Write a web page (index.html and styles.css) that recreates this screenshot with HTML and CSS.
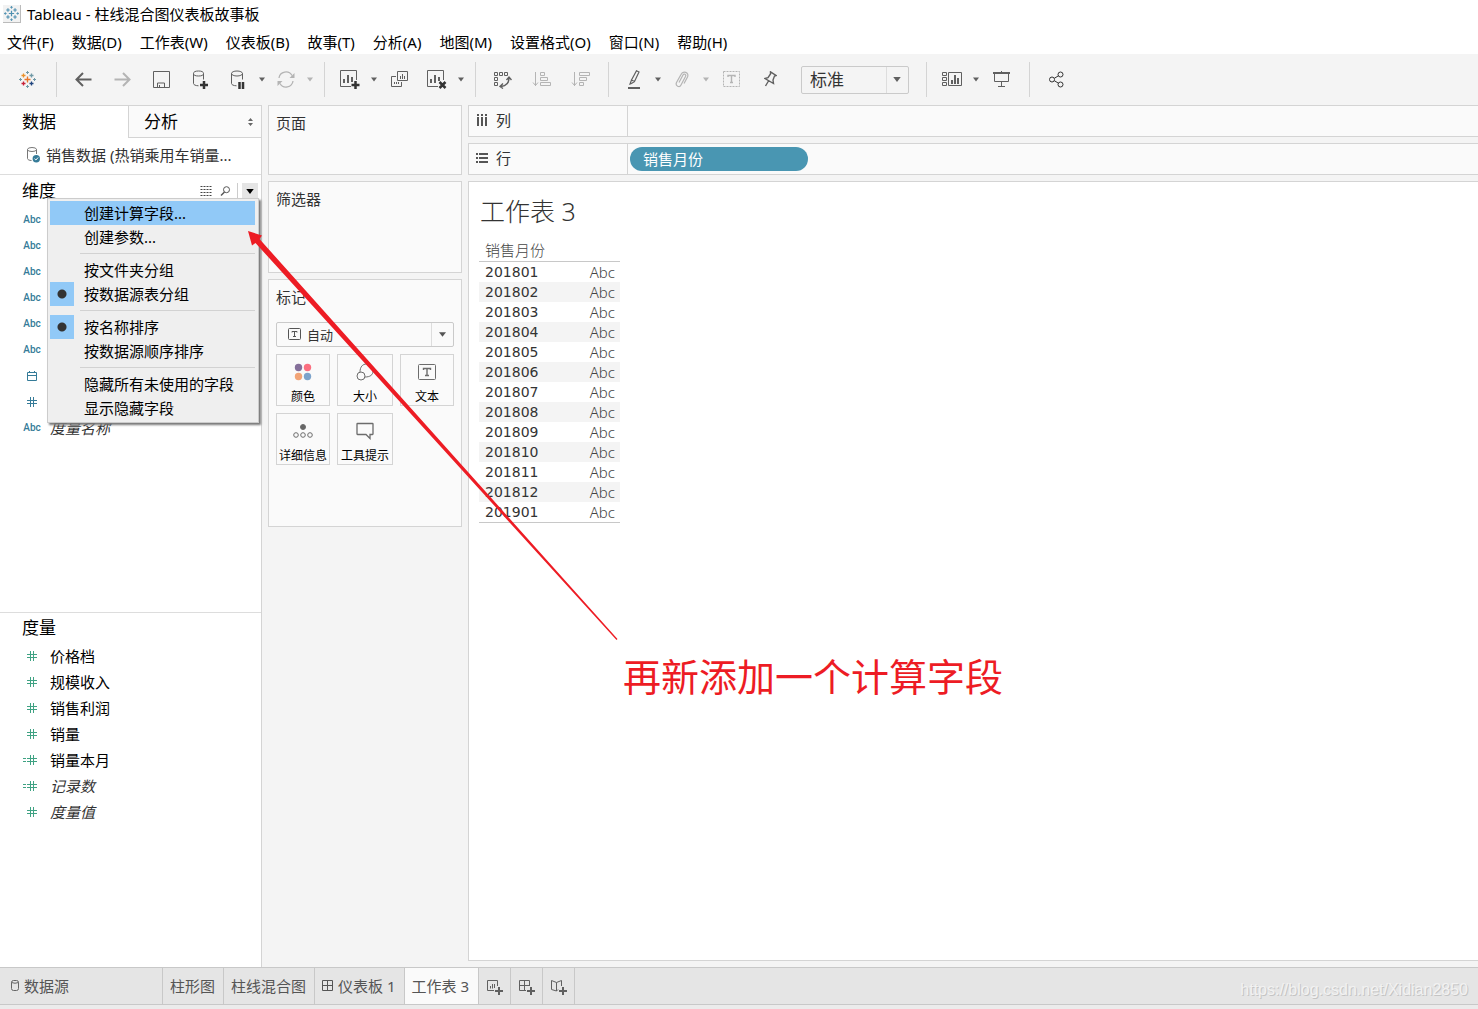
FILE: index.html
```html
<!DOCTYPE html>
<html lang="zh-CN">
<head>
<meta charset="utf-8">
<title>Tableau - 柱线混合图仪表板故事板</title>
<link rel="stylesheet" href="styles.css">
</head>
<body>
<svg class="sprite" aria-hidden="true">
  <symbol id="caret" viewBox="0 0 6 4"><path d="M0 0h6L3 4z" fill="currentColor"/></symbol>
  <symbol id="hash" viewBox="0 0 10 10"><path d="M3.500 0v10M6.500 0v10M0 3.500h10M0 6.500h10" fill="none" stroke="currentColor"/></symbol>
  <symbol id="eqhash" viewBox="0 0 14 10"><path d="M7.500 0v10M10.500 0v10M4 3.500h10M4 6.500h10M0 3.500h3M0 6.500h3" fill="none" stroke="currentColor"/></symbol>
  <symbol id="grid4" viewBox="0 0 11 11"><path d="M.5.5h10v10H.5zM5.500.5v10M.5 5.500h10" fill="none" stroke="currentColor"/></symbol>
  <symbol id="flake" viewBox="0 0 17 17"><path d="M8.500 5.500v6M5.500 8.500h6" stroke="var(--c0)" stroke-width="1.400"/><path d="M4.500 2.500v4M2.500 4.500h4" stroke="var(--c1)" stroke-width="1.300"/><path d="M12.500 2.500v4M10.500 4.500h4" stroke="var(--c2)" stroke-width="1.300"/><path d="M4.500 10.500v4M2.500 12.500h4" stroke="var(--c3)" stroke-width="1.300"/><path d="M12.500 10.500v4M10.500 12.500h4" stroke="var(--c4)" stroke-width="1.300"/><path d="M8.500 0v3M7 1.500h3M8.500 14v3M7 15.500h3M1.500 7v3M0 8.500h3M15.500 7v3M14 8.500h3" stroke="var(--c2)"/></symbol>
</svg>

<div class="app">
  <header>
    <div class="titlebar">
      <span class="app-icon"><svg width="15" height="15"><use href="#flake"/></svg></span>
      <span>Tableau - 柱线混合图仪表板故事板</span>
    </div>
    <nav class="menubar">
      <button>文件(F)</button><button>数据(D)</button><button>工作表(W)</button><button>仪表板(B)</button><button>故事(T)</button><button>分析(A)</button><button>地图(M)</button><button>设置格式(O)</button><button>窗口(N)</button><button>帮助(H)</button>
    </nav>
  </header>

  <div class="toolbar">
    <button class="tool home" aria-label="起始页"><svg width="17" height="17"><use href="#flake"/></svg></button>
    <span class="divider"></span>
    <button class="tool" aria-label="撤消"><svg width="17" height="15" viewBox="0 0 17 15"><path d="M16.500 7.500H1.500M8 1L1.500 7.500 8 14" stroke-width="2"/></svg></button>
    <button class="tool off" aria-label="重做"><svg width="17" height="15" viewBox="0 0 17 15"><path d="M.5 7.500h15M9 1l6.500 6.500L9 14" stroke-width="2"/></svg></button>
    <button class="tool" aria-label="保存"><svg width="17" height="17" viewBox="0 0 17 17"><path d="M.5.5h16v16H.5zM4.500 16v-4h7v4M6.500 16v-2"/></svg></button>
    <button class="tool" aria-label="新建数据源"><svg width="17" height="19" viewBox="0 0 17 19"><ellipse cx="6.500" cy="3.500" rx="5" ry="2.500"/><path d="M1.500 3.500v10c0 1.200 2 2.200 5 2.300M11.500 3.500v6"/><path d="M12 11v8M8 15h8" class="dark"/></svg></button>
    <button class="tool split" aria-label="暂停更新"><svg width="14" height="19" viewBox="0 0 14 19"><ellipse cx="6" cy="3.500" rx="5.500" ry="2.500"/><path d="M.5 3.500v10c0 1.200 2 2.200 5 2.300M11.500 3.500v6"/><path d="M8.500 12v7M12 12v7" class="dark"/></svg></button>
    <button class="more" aria-label="更新选项"><svg width="6" height="5"><use href="#caret"/></svg></button>
    <button class="tool split off" aria-label="刷新"><svg width="18" height="17" viewBox="0 0 18 17"><path d="M2 7A7 7 0 0 1 15 4.500M16 10A7 7 0 0 1 3 12.500" stroke-width="1.300"/><path d="M17.500 2v5h-5zM.5 15v-5h5z" fill="currentColor" stroke="none"/></svg></button>
    <button class="more off" aria-label="刷新选项"><svg width="6" height="5"><use href="#caret"/></svg></button>
    <span class="divider"></span>
    <button class="tool split" aria-label="新建工作表"><svg width="20" height="19" viewBox="0 0 20 19"><path d="M11 16.500H.5V.5h16V10"/><path d="M4 9v4M8 5v8M12 7v5" stroke-width="2"/><path d="M15.500 11v8M11.500 15h8" class="dark"/></svg></button>
    <button class="more" aria-label="新建选项"><svg width="6" height="5"><use href="#caret"/></svg></button>
    <button class="tool" aria-label="复制工作表"><svg width="17" height="17" viewBox="0 0 17 17"><path d="M6.500.5h10v9h-10zM5 5.500H.5v10h10V11M9.500 5v3M11.500 3v5M13.500 5v3M3.500 11v2M5.500 11v2M7.500 11v2"/></svg></button>
    <button class="tool split" aria-label="清除工作表"><svg width="20" height="19" viewBox="0 0 20 19"><path d="M11 16.500H.5V.5h16V10"/><path d="M4 9v4M8 5v8M12 7v4" stroke-width="2"/><path d="M12.500 12l6 6M18.500 12l-6 6" class="dark"/></svg></button>
    <button class="more" aria-label="清除选项"><svg width="6" height="5"><use href="#caret"/></svg></button>
    <span class="divider"></span>
    <button class="tool" aria-label="交换行和列"><svg width="19" height="19" viewBox="0 0 19 19"><path d="M1.500 2.500h3v3h-3zM6.500 2.500h3v3h-3zM11.500 2.500h3v3h-3zM1.500 7.500h3v3h-3zM1.500 12.500h3v3h-3z"/><path d="M16 8c0 5-3 8-8 8.500M13.500 10L16 7l2.500 3M10 13.500L7 16.500l3 2" stroke-width="1.400"/></svg></button>
    <button class="tool off" aria-label="升序排序"><svg width="19" height="17" viewBox="0 0 19 17"><path d="M3.500 1v14M1 11.500l2.500 3 2.500-3M8.500 1.500h4v3h-4zM8.500 6.500h7v3h-7zM8.500 11.500h10v3h-10z"/></svg></button>
    <button class="tool off" aria-label="降序排序"><svg width="19" height="17" viewBox="0 0 19 17"><path d="M3.500 1v14M1 11.500l2.500 3 2.500-3M8.500 1.500h10v3h-10zM8.500 6.500h7v3h-7zM8.500 11.500h4v3h-4z"/></svg></button>
    <span class="divider"></span>
    <button class="tool split" aria-label="突出显示"><svg width="14" height="19" viewBox="0 0 14 19"><path d="M9.500.7l2.500 1.300-4.500 9.500-3-1.500zM4.500 10l-1.500 4 1.500-.5L7.500 11.500" stroke-width="1.200"/><path d="M1 18h12" stroke-width="2"/></svg></button>
    <button class="more" aria-label="突出显示选项"><svg width="6" height="5"><use href="#caret"/></svg></button>
    <button class="tool split off" aria-label="分组"><svg width="14" height="17" viewBox="0 0 14 17"><path d="M4 11.500L8 4c1-1.800 3.500-.5 2.500 1.500L6 14c-1.500 3-6 1-4.500-2.500L6 3.500c2-4.500 8.500-2 6.500 2.500L9 12.500" stroke-width="1.200"/></svg></button>
    <button class="more off" aria-label="分组选项"><svg width="6" height="5"><use href="#caret"/></svg></button>
    <button class="tool off" aria-label="显示标记标签"><svg width="19" height="17" viewBox="0 0 19 17"><path d="M1.500.5h16v15h-16z" stroke-dasharray="2 1"/><path d="M6 6V4.500h7V6M9.500 4.500v7M8 11.500h3" stroke-width="1.400"/></svg></button>
    <button class="tool" aria-label="固定轴"><svg width="13" height="17" viewBox="0 0 13 17"><path d="M6.500.8l5.500 3.700-1.500.5-1.500 4 .5 3.500L1 7.500l3-.8L6.500 3zM4.500 10L1.500 15" stroke-width="1.400"/></svg></button>
    <div class="fit">
      <select aria-label="适合方式"><option>标准</option></select>
      <svg width="8" height="5"><use href="#caret"/></svg>
    </div>
    <span class="divider"></span>
    <button class="tool split" aria-label="显示/隐藏卡"><svg width="20" height="15" viewBox="0 0 20 15"><path d="M.5.5h4v3h-4zM.5 5.500h4v3h-4zM.5 10.500h4v3h-4zM6.500.5h13v13h-13z"/><path d="M10 8v4M13 3v9M16 6v6" stroke-width="2"/></svg></button>
    <button class="more" aria-label="卡选项"><svg width="6" height="5"><use href="#caret"/></svg></button>
    <button class="tool" aria-label="演示模式"><svg width="17" height="17" viewBox="0 0 17 17"><path d="M0 2h17" stroke-width="2"/><path d="M1.500 2v8.500h14V2M8.500 0v1M8.500 10.500v5M5 15.500h7"/></svg></button>
    <span class="divider"></span>
    <button class="tool share" aria-label="共享"><svg width="17" height="17" viewBox="0 0 17 17"><circle cx="4" cy="8.500" r="2.500"/><circle cx="12.500" cy="3.500" r="2.500"/><circle cx="12.500" cy="13.500" r="2.500"/><path d="M6.300 7.300l4-2.400M6.300 9.700l4 2.400"/></svg></button>
  </div>

  <main class="workspace">
    <aside class="sidebar">
      <div class="side-tabs">
        <button class="side-tab current">数据</button>
        <button class="side-tab">分析<svg width="5" height="8" viewBox="0 0 5 8"><path d="M0 3l2.500-3L5 3zM0 5l2.500 3L5 5z" fill="#666"/></svg></button>
      </div>
      <div class="source">
        <svg width="14" height="16" viewBox="0 0 14 16" fill="none" stroke="#777"><ellipse cx="6" cy="2.500" rx="4.500" ry="2"/><path d="M1.500 2.500v9c0 1.200 2 2 4 2M10.500 2.500V7"/><circle cx="10.300" cy="11.700" r="3.700" fill="#357b98" stroke="none"/><path d="M8.500 11.700l1.400 1.300 2.200-2.500" stroke="#fff"/></svg>
        <span>销售数据 (热销乘用车销量...</span>
      </div>
      <section class="dimensions">
        <div class="section-head">
          <h2>维度</h2>
          <button aria-label="列表视图"><svg width="13" height="10" viewBox="0 0 13 10"><path d="M.5.5h12M.5 3.500h12M.5 6.500h12M.5 9.500h12" stroke="#444" stroke-dasharray="2 1"/></svg></button>
          <button aria-label="查找字段"><svg width="11" height="10" viewBox="0 0 11 10" fill="none" stroke="#555"><circle cx="6.500" cy="3.700" r="3"/><path d="M4.500 6L1 9.500" stroke-width="1.400"/></svg></button>
          <button class="open" aria-label="维度菜单"><svg width="8" height="5"><use href="#caret"/></svg></button>
        </div>
        <ul class="fields">
          <li><span class="kind">Abc</span></li>
          <li><span class="kind">Abc</span></li>
          <li><span class="kind">Abc</span></li>
          <li><span class="kind">Abc</span></li>
          <li><span class="kind">Abc</span></li>
          <li><span class="kind">Abc</span></li>
          <li><span class="kind"><svg width="10" height="10" viewBox="0 0 10 10"><path d="M.5 1.500h9v8h-9zM.5 4.500h9M2.500 0v2M7.500 0v2" fill="none" stroke="currentColor"/></svg></span></li>
          <li><span class="kind"><svg width="10" height="10"><use href="#hash"/></svg></span></li>
          <li><span class="kind">Abc</span><em>度量名称</em></li>
        </ul>
        <div class="popup" role="menu">
          <button class="hover" role="menuitem">创建计算字段...</button>
          <button role="menuitem">创建参数...</button>
          <hr>
          <button role="menuitem">按文件夹分组</button>
          <button class="checked" role="menuitemradio" aria-checked="true">按数据源表分组</button>
          <hr>
          <button class="checked" role="menuitemradio" aria-checked="true">按名称排序</button>
          <button role="menuitem">按数据源顺序排序</button>
          <hr>
          <button role="menuitem">隐藏所有未使用的字段</button>
          <button role="menuitem">显示隐藏字段</button>
        </div>
      </section>
      <section class="measures">
        <div class="section-head"><h2>度量</h2></div>
        <ul class="fields">
          <li><span class="kind"><svg width="10" height="10"><use href="#hash"/></svg></span>价格档</li>
          <li><span class="kind"><svg width="10" height="10"><use href="#hash"/></svg></span>规模收入</li>
          <li><span class="kind"><svg width="10" height="10"><use href="#hash"/></svg></span>销售利润</li>
          <li><span class="kind"><svg width="10" height="10"><use href="#hash"/></svg></span>销量</li>
          <li><span class="kind calc"><svg width="14" height="10"><use href="#eqhash"/></svg></span>销量本月</li>
          <li><span class="kind calc"><svg width="14" height="10"><use href="#eqhash"/></svg></span><em>记录数</em></li>
          <li><span class="kind"><svg width="10" height="10"><use href="#hash"/></svg></span><em>度量值</em></li>
        </ul>
      </section>
    </aside>

    <div class="cards">
      <section class="card pages"><h3>页面</h3></section>
      <section class="card filters"><h3>筛选器</h3></section>
      <section class="card marks">
        <h3>标记</h3>
        <div class="mark-type">
          <svg width="13" height="13" viewBox="0 0 13 13" fill="none" stroke="#555"><rect x=".5" y=".5" width="12" height="11" rx="1"/><path d="M4 4.500v-1h5v1M6.500 3.500v5M5 8.500h3"/></svg>
          <select aria-label="标记类型"><option>自动</option></select>
          <svg class="arrow" width="7" height="5"><use href="#caret"/></svg>
        </div>
        <div class="mark-grid">
          <button><svg width="18" height="18" viewBox="0 0 18 18"><circle cx="4.500" cy="4.500" r="3.700" fill="#85709a"/><circle cx="13.500" cy="4.500" r="3.700" fill="#fb6f80"/><circle cx="4.500" cy="13.500" r="3.700" fill="#f2a477"/><circle cx="13.500" cy="13.500" r="3.700" fill="#7da3cb"/></svg>颜色</button>
          <button><svg width="18" height="18" viewBox="0 0 18 18" class="line"><circle cx="5" cy="13" r="4"/><path d="M4 9c0-5 2.500-8 6.500-8s6.500 3 6.500 7-3 6-8 6"/></svg>大小</button>
          <button><svg width="18" height="16" viewBox="0 0 18 16" class="line"><rect x=".5" y=".5" width="17" height="15" rx="1"/><path d="M5.500 6V4.500h7V6M9 4.500v7M7 11.500h4" stroke-width="1.400"/></svg>文本</button>
          <button><svg width="20" height="16" viewBox="0 0 20 16" class="line"><circle cx="10" cy="4" r="2.500" fill="#666"/><circle cx="3" cy="12" r="2.300"/><circle cx="10" cy="12" r="2.300"/><circle cx="17" cy="12" r="2.300"/></svg>详细信息</button>
          <button><svg width="18" height="18" viewBox="0 0 18 18" class="line"><path d="M1.500 1.500h15q.5 0 .5.500v10q0 .5-.5.500H14v4l-4-4H1.500Q1 12.500 1 12V2q0-.5.5-.5z" stroke-width="1.300"/></svg>工具提示</button>
        </div>
      </section>
    </div>

    <div class="view">
      <div class="shelf">
        <div class="shelf-name"><svg width="12" height="12" viewBox="0 0 12 12"><path d="M2 0v2M6 0v2M10 0v2M2 3v9M6 3v9M10 3v9" stroke="#555" stroke-width="2"/></svg>列</div>
      </div>
      <div class="shelf">
        <div class="shelf-name"><svg width="12" height="12" viewBox="0 0 12 12"><path d="M0 2h2M0 6h2M0 10h2M3 2h9M3 6h9M3 10h9" stroke="#555" stroke-width="2"/></svg>行</div>
        <button class="pill">销售月份</button>
      </div>
      <section class="sheet">
        <h1>工作表 3</h1>
        <table>
          <thead><tr><th colspan="2">销售月份</th></tr></thead>
          <tbody>
            <tr><th>201801</th><td>Abc</td></tr>
            <tr><th>201802</th><td>Abc</td></tr>
            <tr><th>201803</th><td>Abc</td></tr>
            <tr><th>201804</th><td>Abc</td></tr>
            <tr><th>201805</th><td>Abc</td></tr>
            <tr><th>201806</th><td>Abc</td></tr>
            <tr><th>201807</th><td>Abc</td></tr>
            <tr><th>201808</th><td>Abc</td></tr>
            <tr><th>201809</th><td>Abc</td></tr>
            <tr><th>201810</th><td>Abc</td></tr>
            <tr><th>201811</th><td>Abc</td></tr>
            <tr><th>201812</th><td>Abc</td></tr>
            <tr><th>201901</th><td>Abc</td></tr>
          </tbody>
        </table>
      </section>
    </div>
  </main>

  <footer class="sheet-tabs">
    <button class="data-source"><svg width="8" height="11" viewBox="0 0 8 11" fill="none" stroke="#666"><rect x=".5" y=".5" width="7" height="10" rx="2"/><path d="M.5 2.500q3.500 1.500 7 0"/></svg>数据源</button>
    <button>柱形图</button>
    <button>柱线混合图</button>
    <button><svg width="11" height="11"><use href="#grid4"/></svg>仪表板 1</button>
    <button class="current">工作表 3</button>
    <button class="add" aria-label="新建工作表"><svg width="16" height="15" viewBox="0 0 16 15"><path d="M7 10.500H.5V.5h10V6M3.500 6v2.500M5.500 4v4.500M7.500 4v4"/><path d="M12 7v8M8 11h8" stroke-width="2"/></svg></button>
    <button class="add" aria-label="新建仪表板"><svg width="16" height="15" viewBox="0 0 16 15"><path d="M7 10.500H.5V.5h10V6M5.500.5v10M.5 5.500h10"/><path d="M12 7v8M8 11h8" stroke-width="2"/></svg></button>
    <button class="add" aria-label="新建故事"><svg width="16" height="15" viewBox="0 0 16 15"><path d="M7 9.500L5.500 11 .5 9.500V.5l5 2 5-2v5.500M5.500 2.500v8.500"/><path d="M12 7v8M8 11h8" stroke-width="2"/></svg></button>
  </footer>
  <div class="status"></div>

  <svg class="callout-arrow" width="370" height="409" viewBox="0 0 370 409" aria-hidden="true"><path d="M0 0L14 4.500 11.500 8 369.500 408 368.500 409 7.500 12 4 14.500z" fill="#ed1c24"/></svg>
  <p class="callout">再新添加一个计算字段</p>
  <p class="watermark">https://blog.csdn.net/Xidian2850</p>
</div>
</body>
</html>
```
FILE: styles.css
```css
* { box-sizing: border-box; }

body {
  margin: 0;
  font: 15px/20px "Noto Sans", "Noto Sans CJK SC", sans-serif;
  color: #000;
  background: #fff;
}

h1, h2, h3, p, ul { margin: 0; padding: 0; font-weight: 400; }
ul { list-style: none; }

button, select {
  margin: 0;
  padding: 0;
  border: 0;
  border-radius: 0;
  background: none;
  font: inherit;
  color: inherit;
}

select { appearance: none; }
svg { flex: none; display: block; }
.sprite { position: absolute; width: 0; height: 0; }

.app {
  position: relative;
  display: flex;
  flex-direction: column;
  min-height: 100vh;
  overflow: hidden;
}

/* title and menus */
.titlebar {
  display: flex;
  align-items: center;
  gap: 6px;
  height: 28px;
  padding-left: 3px;
}

.app-icon {
  --c0: #4e8fb0; --c1: #4e8fb0; --c2: #4e8fb0; --c3: #4e8fb0; --c4: #4e8fb0;
  display: grid;
  place-items: center;
  width: 18px;
  height: 18px;
  background: #f2f2f2;
  border-right: 1px solid #bbb;
  border-bottom: 1px solid #bbb;
}

.menubar {
  display: flex;
  gap: 18px;
  height: 26px;
  padding: 2px 0 0 7px;
  align-items: center;
}

/* toolbar */
.toolbar {
  display: flex;
  align-items: center;
  height: 51px;
  background: #f4f4f4;
  color: #606060;
}

.tool, .more { display: grid; place-items: center; height: 37px; }
.tool { width: 39px; }
.tool svg { fill: none; stroke: currentColor; }
.tool.split { width: 36px; }
.more { width: 12px; }
.off { color: #b4b4b4; }
.tool .dark { stroke: #333; stroke-width: 2.5; }
.tool.share { color: #333; }

.tool.home {
  --c0: #e8762c; --c1: #eb9129; --c2: #7099a6; --c3: #c72037; --c4: #1f447e;
  width: 41px;
  margin-left: 7px;
}

.divider { width: 1px; height: 35px; margin: 0 7px 0 8px; background: #d4d4d4; }

.fit, .mark-type {
  position: relative;
  display: flex;
  align-items: center;
  border: 1px solid #cacaca;
  border-radius: 2px;
}

.fit { width: 108px; height: 28px; margin: 0 9px 0 11px; }
.fit select { width: 100%; height: 26px; padding-left: 8px; font-size: 17px; color: #333; }
.fit svg { position: absolute; right: 7px; }

.fit::after, .mark-type::after {
  content: "";
  position: absolute;
  top: 0;
  bottom: 0;
  right: 21px;
  border-left: 1px solid #ddd;
}

/* work area */
.workspace {
  flex: 1;
  display: flex;
  gap: 6px;
  background: #f4f4f4;
}

.sidebar {
  display: flex;
  flex-direction: column;
  width: 262px;
  background: #fff;
  border-top: 1px solid #d4d4d4;
  border-right: 1px solid #d4d4d4;
}

.side-tabs { display: flex; height: 32px; font-size: 17px; }

.side-tab {
  display: flex;
  align-items: center;
  justify-content: space-between;
  flex: 1;
  padding: 0 8px 0 15px;
  background: #fafafa;
  border: solid #d4d4d4;
  border-width: 0 0 1px 1px;
}

.side-tab.current {
  flex: none;
  width: 128px;
  padding-left: 22px;
  background: #fff;
  border: 0;
}

.source {
  display: flex;
  align-items: center;
  gap: 6px;
  height: 37px;
  padding: 0 0 2px 26px;
  color: #333;
  border-bottom: 1px solid #ddd;
}

.section-head {
  display: flex;
  align-items: center;
  height: 32px;
  padding: 0 3px 0 22px;
}

.section-head h2 { flex: 1; font-size: 17px; }
.section-head button { display: grid; place-items: center; width: 19px; height: 16px; }
.section-head .open { width: 16px; margin-left: 7px; background: #e5e5e5; box-shadow: -4px 0 0 #fff, -5px 0 0 #ccc; }

.fields li { display: flex; align-items: center; height: 26px; }

.kind {
  display: grid;
  place-items: center;
  flex: none;
  width: 28px;
  margin-left: 18px;
  margin-right: 4px;
  font-family: Roboto, sans-serif;
  font-size: 10px;
  font-weight: 500;
  color: #357b98;
}

.kind.calc { padding-right: 4px; }
.fields em { color: #333; }
.dimensions { position: relative; flex: 1; }
.measures { height: 355px; border-top: 1px solid #ddd; }
.measures .section-head { height: 30px; }
.measures .kind { color: #3fa283; }

.popup {
  position: absolute;
  left: 47px;
  top: 23px;
  width: 212px;
  padding: 2px 3px 2px 2px;
  background: #efefef;
  border: 1px solid #ccc;
  box-shadow: 2px 2px 2px #777;
}

.popup button {
  position: relative;
  display: block;
  width: 100%;
  height: 24px;
  padding-left: 34px;
  line-height: 24px;
  text-align: left;
  white-space: nowrap;
}

.popup .hover { background: #91c9f7; }
.popup hr { height: 1px; margin: 4px 0 4px 30px; border: 0; background: #d2d2d2; }

.popup .checked::before {
  content: "";
  position: absolute;
  left: 0;
  top: 0;
  width: 24px;
  height: 24px;
  background: radial-gradient(circle, #333 4px, #91c9f7 5px);
}

/* cards */
.cards { display: flex; flex-direction: column; gap: 6px; width: 194px; }
.card { padding: 7px; background: #fafafa; border: 1px solid #d4d4d4; }
.card h3 { font-size: 15px; color: #333; }
.pages { height: 70px; }
.filters { height: 92px; }
.marks { height: 248px; }

.mark-type { height: 25px; margin: 15px 0 7px; padding-left: 11px; }
.mark-type select { flex: 1; height: 23px; padding-left: 6px; font-size: 13px; color: #333; }
.mark-type .arrow { position: absolute; right: 7px; color: #555; }

.mark-grid { display: grid; grid-template-columns: 54px 56px 54px; gap: 7px; }

.mark-grid button {
  display: grid;
  grid-template-rows: 34px 16px;
  place-items: center;
  height: 52px;
  font-size: 12px;
  line-height: 16px;
  border: 1px solid #d4d4d4;
  white-space: nowrap;
}

.mark-grid .line { fill: none; stroke: #6c6c6c; }

/* shelves and sheet */
.view {
  flex: 1;
  display: flex;
  flex-direction: column;
  gap: 6px;
  padding-bottom: 6px;
}

.shelf {
  display: flex;
  align-items: center;
  height: 32px;
  background: #fafafa;
  border: solid #d4d4d4;
  border-width: 1px 0 1px 1px;
}

.shelf-name {
  display: flex;
  align-items: center;
  gap: 8px;
  width: 159px;
  height: 30px;
  padding: 0 0 2px 7px;
  color: #333;
  border-right: 1px solid #d4d4d4;
}

.pill {
  width: 178px;
  height: 24px;
  margin-left: 2px;
  padding-left: 13px;
  text-align: left;
  color: #fff;
  background: #4996b2;
  border-radius: 12px;
}

.sheet {
  flex: 1;
  padding: 12px 10px;
  background: #fff;
  border: solid #d4d4d4;
  border-width: 1px 0 1px 1px;
}

.sheet h1 {
  padding-left: 1px;
  font-size: 25px;
  line-height: 34px;
  font-weight: 300;
  color: #333;
}

.sheet table { width: 141px; margin-top: 12px; border-collapse: collapse; }
.sheet th, .sheet td { height: 20px; padding: 0 5px 0 6px; line-height: 20px; font-weight: 400; text-align: left; }
.sheet thead th { height: 21px; font-weight: 300; color: #444; border-bottom: 1px solid #c8c8c8; }
.sheet tbody { border-bottom: 1px solid #c8c8c8; }
.sheet tbody th { font-family: "DejaVu Sans", sans-serif; font-size: 14px; color: #333; }
.sheet tbody td { text-align: right; font-weight: 300; color: #444; }
.sheet tbody tr:nth-child(even) { background: #f4f4f4; }

/* sheet tabs */
.sheet-tabs {
  display: flex;
  height: 38px;
  color: #555;
  background: #e5e5e5;
  border: solid #c8c8c8;
  border-width: 1px 0;
}

.sheet-tabs button {
  display: flex;
  align-items: center;
  gap: 5px;
  padding: 0 8px 1px 7px;
  border-right: 1px solid #c8c8c8;
}

.sheet-tabs .data-source { width: 163px; padding-left: 11px; }
.sheet-tabs .current { padding-right: 9px; background: #fafafa; }
.sheet-tabs .add { width: 32px; padding: 3px 0 0 8px; }
.add svg { fill: none; stroke: #606060; }
.status { height: 4px; background: #ebebeb; }

/* annotation laid over the window */
.callout-arrow { position: absolute; left: 248px; top: 231px; }

.callout {
  position: absolute;
  left: 623px;
  top: 650px;
  font-size: 38px;
  line-height: 52px;
  color: #ed1c24;
  white-space: nowrap;
}

.watermark {
  position: absolute;
  right: 10px;
  bottom: 9px;
  font-family: "Liberation Sans", Arial, sans-serif;
  font-size: 16px;
  color: #f2f2f2;
  text-shadow: 1px 1px 0 #c4c4c4;
}
```
